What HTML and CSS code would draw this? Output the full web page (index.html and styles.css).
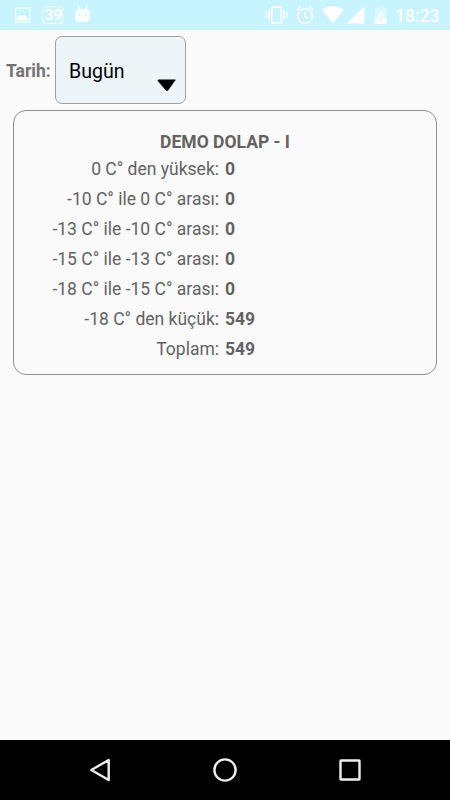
FILE: index.html
```html
<!DOCTYPE html>
<html lang="tr">
<head>
  <meta charset="UTF-8" />
  <title>Demo Dolap</title>
  <link rel="stylesheet" href="styles.css">
</head>
<body>
  <header class="status-bar">
    <div class="notifications">
      <svg width="100" height="30" viewBox="0 0 100 30">
        <rect x="15.6" y="8" width="14" height="14" fill="none" stroke="#fff" stroke-width="1.2" />
        <path d="M17 20v-3l3-2 2 1 2-1 4 3v2z" fill="#fff" />
        <rect x="43.5" y="6.7" width="19" height="16.6" rx="2" fill="none" stroke="#fff" stroke-opacity=".65" stroke-width="1.3" />
        <path d="M43.5 10.5v9" stroke="#c8f4ff" stroke-width="2" />
        <path d="M44 10l-1.5 2v6l1.5 2" fill="none" stroke="#fff" stroke-opacity=".65" />
        <text x="53.3" y="20.3" class="badge-text">39</text>
        <path d="M78 5.5l1.8 4.5M87.2 5.5l-1.8 4.5" stroke="#fff" stroke-width="1.2" />
        <rect x="75.2" y="9.2" width="14.6" height="12.6" rx="4" fill="#fff" />
        <circle cx="79.3" cy="15" r="1.1" fill="#c8f4ff" />
        <circle cx="85.7" cy="15" r="1.1" fill="#c8f4ff" />
      </svg>
    </div>
    <div class="system">
      <svg width="130" height="30" viewBox="260 0 130 30">
        <!-- vibrate -->
        <rect x="271.7" y="7.2" width="9.6" height="15.6" rx="1" fill="none" stroke="#fff" stroke-width="1.7" />
        <path d="M268.8 10v10M266 12v6M284.2 10v10M287 12v6" stroke="#fff" stroke-width="1.4" />
        <!-- alarm -->
        <circle cx="305" cy="16" r="7.3" fill="none" stroke="#fff" stroke-width="1.5" />
        <path d="M305 11.5v5l3.5 2.2M296.5 10l4-3.4M313.5 10l-4-3.4" fill="none" stroke="#fff" stroke-width="1.4" />
        <!-- wifi and signal -->
        <path d="M322 9.8Q333 2.2 344 9.8L333 23.5z" fill="#fff" />
        <path d="M347 23.5h17.3V6.2z" fill="#fff" />
        <!-- battery -->
        <path d="M374.7 8h3.3V6.2h5V8h3.3v16h-11.6z" fill="#fff" fill-opacity=".35" />
        <path d="M374.7 18h11.6v6h-11.6z" fill="#fff" />
        <path d="M381.8 10l-4.5 7h2.9v4.5l4.3-7h-2.7z" fill="#c8f4ff" />
        <path d="M381.8 10l-4.5 7h2.9v1h2.2l2.1-3.5h-2.7z" fill="#fff" fill-opacity=".8" />
      </svg>
      <span class="clock">18:23</span>
    </div>
  </header>

  <main class="content">
    <div class="filter">
      <span class="filter-label">Tarih:</span>
      <div class="select">
        <span class="select-value">Bugün</span>
        <svg class="arrow" width="20" height="13" viewBox="0 0 20 13">
          <path d="M1.5.8h17L11 11.3q-1 1-2 0L.8 1.8z" fill="#000" stroke="#000" stroke-width=".5" stroke-linejoin="round" />
        </svg>
      </div>
    </div>

    <section class="card">
      <h3>DEMO DOLAP - I</h3>
      <div class="row"><span>0 C° den yüksek:</span><b>0</b></div>
      <div class="row"><span>-10 C° ile 0 C° arası:</span><b>0</b></div>
      <div class="row"><span>-13 C° ile -10 C° arası:</span><b>0</b></div>
      <div class="row"><span>-15 C° ile -13 C° arası:</span><b>0</b></div>
      <div class="row"><span>-18 C° ile -15 C° arası:</span><b>0</b></div>
      <div class="row"><span>-18 C° den küçük:</span><b>549</b></div>
      <div class="row"><span>Toplam:</span><b>549</b></div>
    </section>
  </main>

  <nav class="nav-bar">
    <svg width="30" height="30" viewBox="0 0 30 30"><path d="M6.3 15L23.7 5v20z" /></svg>
    <svg width="30" height="30" viewBox="0 0 30 30"><circle cx="15" cy="15" r="10.6" /></svg>
    <svg width="30" height="30" viewBox="0 0 30 30"><rect x="5.5" y="5.5" width="19" height="19" rx=".5" /></svg>
  </nav>
</body>
</html>
```

FILE: styles.css
```css
* {
  box-sizing: border-box;
}

body {
  margin: 0;
  height: 800px;
  display: flex;
  flex-direction: column;
  font-family: Roboto, sans-serif;
  font-size: 17.5px;
  background: #fafafa;
  color: #636363;
  overflow: hidden;
}

.status-bar {
  display: flex;
  justify-content: space-between;
  height: 30px;
  background: #c8f4ff;
}

.status-bar svg {
  display: block;
}

.badge-text {
  font-size: 15px;
  font-weight: bold;
  fill: #fff;
  text-anchor: middle;
}

.system {
  display: flex;
  padding-right: 10px;
}

.clock {
  width: 50px;
  padding-left: 5px;
  font-weight: 500;
  line-height: 32px;
  color: #fff;
}

.content {
  flex: 1;
  padding: 6px 13px 0;
}

.filter {
  display: flex;
  align-items: center;
  margin-left: -7px;
}

.filter-label {
  width: 49px;
  padding-top: 2px;
  font-weight: bold;
  color: #737373;
}

.select {
  display: flex;
  justify-content: space-between;
  align-items: center;
  width: 131px;
  height: 68px;
  padding: 0 8px 0 13px;
  border: 1px solid #a0a0a0;
  border-radius: 7px;
  background: #eef5f9;
  color: #000;
}

.select-value {
  padding-top: 2px;
  font-size: 19.6px;
}

.arrow {
  margin-top: 30px;
}

.card {
  height: 265px;
  margin-top: 6px;
  padding-top: 16px;
  border: 1px solid #919191;
  border-radius: 13px;
}

.card h3 {
  margin: 0;
  font-size: 17.5px;
  line-height: 30px;
  height: 27px;
  text-align: center;
}

.row {
  display: grid;
  grid-template-columns: 205px 1fr;
  gap: 6px;
  line-height: 30px;
}

.row span {
  text-align: right;
}

.nav-bar {
  display: flex;
  justify-content: space-between;
  align-items: center;
  height: 60px;
  padding: 0 85px;
  background: #000;
}

.nav-bar svg {
  fill: none;
  stroke: #eee;
  stroke-width: 2.4;
  stroke-linejoin: round;
}
```
